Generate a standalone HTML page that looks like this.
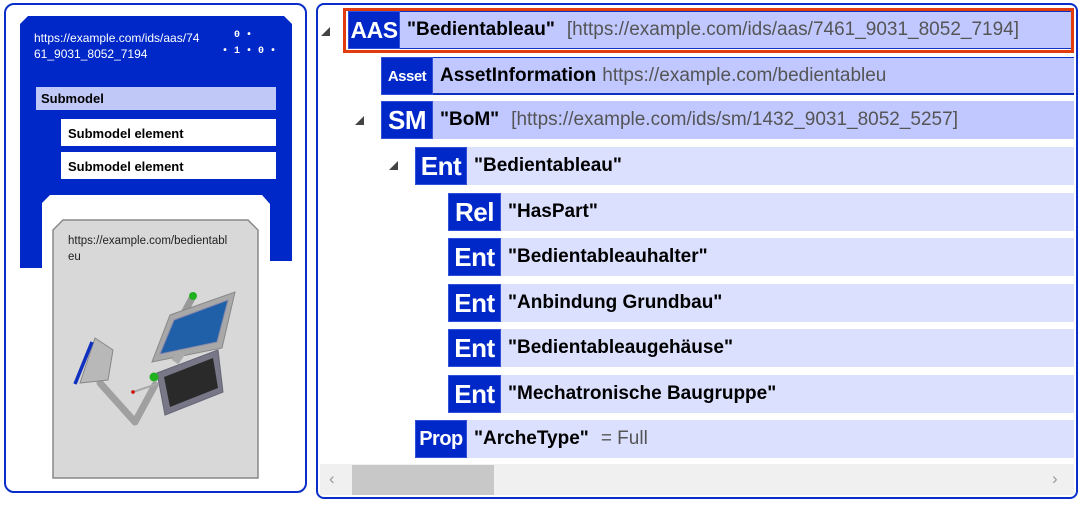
<!DOCTYPE html>
<html><head><meta charset="utf-8"><style>
*{margin:0;padding:0;box-sizing:border-box}
body{width:1082px;height:505px;background:#fff;position:relative;overflow:hidden;font-family:"Liberation Sans",sans-serif}
.a{position:absolute}
.badge{position:absolute;background:#0028c8;color:#fff;font-weight:bold;text-align:center;border:1px solid #3050d8;display:flex;align-items:center;justify-content:center;letter-spacing:-0.5px}
.row{position:absolute;font-size:19px;font-weight:bold;color:#000;display:flex;align-items:center;padding-left:7px;white-space:nowrap;overflow:hidden}
.g{color:#555;font-weight:normal;margin-left:12px}
.tri{position:absolute;width:0;height:0;border-left:9px solid transparent;border-bottom:9px solid #444}
</style></head><body>
<div class="a" style="left:4px;top:3px;width:303px;height:490px;border:2px solid #0a2fc8;border-radius:10px"></div>
<svg class="a" style="left:0;top:0" width="310" height="500">
<polygon points="28,16 284,16 292,24 292,261 270,261 270,204 262,195 50,195 42,203 42,268 20,268 20,24" fill="#0028c8"/>
<polygon points="63,220 248,220 258,230 258,478 53,478 53,230" fill="#d8d8d8" stroke="#888" stroke-width="1.5"/>
<path d="M100,383 L135,422 L155,385" stroke="#a0a0a0" stroke-width="7" fill="none" stroke-linecap="round" stroke-linejoin="round"/>
<polygon points="95,338 113,350 108,380 80,383" fill="#b8b8b8" stroke="#888"/>
<line x1="92" y1="342" x2="75" y2="384" stroke="#1030c0" stroke-width="3.5"/>
<line x1="183" y1="315" x2="192" y2="298" stroke="#999" stroke-width="7"/>
<circle cx="193" cy="296" r="4" fill="#20b020"/>
<polygon points="170,315 235,292 222,348 152,362" fill="#a8a8a8" stroke="#888"/>
<polygon points="174,320 228,300 217,342 160,354" fill="#2060a8" stroke="#88a"/>
<line x1="175" y1="362" x2="182" y2="352" stroke="#aaa" stroke-width="8"/>
<polygon points="157,373 218,350 223,392 165,415" fill="#778" stroke="#667"/>
<polygon points="164,377 213,358 218,388 170,407" fill="#2a2a2a"/>
<circle cx="154" cy="377" r="4.5" fill="#20b020"/>
<line x1="133" y1="392" x2="157" y2="384" stroke="#aaa" stroke-width="2"/>
<circle cx="133" cy="392" r="1.8" fill="#c00"/>
</svg>
<div class="a" style="left:34px;top:30px;color:#fff;font-size:12px;line-height:16px;width:180px">https://example.com/ids/aas/74<br>61_9031_8052_7194</div>
<div class="a" style="left:234px;top:30px;color:#fff;font-size:10px;font-family:'Liberation Mono',monospace;font-weight:bold">0 •</div>
<div class="a" style="left:222px;top:46px;color:#fff;font-size:10px;font-family:'Liberation Mono',monospace;font-weight:bold">• 1 • 0 •</div>
<div class="a" style="left:36px;top:87px;width:240px;height:23px;background:#c0c8f8;font-size:13px;font-weight:bold;padding:4px 5px">Submodel</div>
<div class="a" style="left:61px;top:119px;width:215px;height:27px;background:#fff;font-size:13px;font-weight:bold;padding:7px 7px">Submodel element</div>
<div class="a" style="left:61px;top:152px;width:215px;height:27px;background:#fff;font-size:13px;font-weight:bold;padding:7px 7px">Submodel element</div>
<div class="a" style="left:68px;top:233px;font-size:11.5px;line-height:16px;color:#222;width:185px">https://example.com/bedientabl<br>eu</div>

<div class="a" style="left:316px;top:3px;width:762px;height:496px;border:2px solid #0a2fc8;border-radius:8px"></div>
<div class="tri" style="left:321px;top:27px"></div>
<div class="tri" style="left:355px;top:116px"></div>
<div class="tri" style="left:389px;top:161px"></div>

<div class="a" style="left:343px;top:8px;width:731px;height:45px;border:3px solid #e03c10"></div>
<div class="row" style="left:400px;top:11px;width:671px;height:38px;background:#c0c8ff;border-top:1px solid #1030c0;border-bottom:1px solid #1030c0">"Bedientableau"<span class="g">[https://example.com/ids/aas/7461_9031_8052_7194]</span></div>
<div class="badge" style="left:348px;top:11px;width:52px;height:38px;font-size:23px">AAS</div>

<div class="row" style="left:433px;top:57px;width:641px;height:38px;background:#c0c8ff;border-top:1px solid #1030c0;border-bottom:2px solid #1030c0">AssetInformation<span class="g" style="margin-left:6px">https://example.com/bedientableu</span></div>
<div class="badge" style="left:381px;top:57px;width:52px;height:38px;font-size:15px">Asset</div>

<div class="row" style="left:433px;top:101px;width:641px;height:38px;background:#c0c8ff">"BoM"<span class="g">[https://example.com/ids/sm/1432_9031_8052_5257]</span></div>
<div class="badge" style="left:381px;top:101px;width:52px;height:38px;font-size:26px">SM</div>

<div class="row" style="left:467px;top:147px;width:607px;height:38px;background:#dce0ff">"Bedientableau"</div>
<div class="badge" style="left:415px;top:147px;width:52px;height:38px;font-size:26px">Ent</div>

<div class="row" style="left:501px;top:193px;width:573px;height:38px;background:#dce0ff">"HasPart"</div>
<div class="badge" style="left:448px;top:193px;width:53px;height:38px;font-size:26px">Rel</div>
<div class="row" style="left:501px;top:238px;width:573px;height:38px;background:#dce0ff">"Bedientableauhalter"</div>
<div class="badge" style="left:448px;top:238px;width:53px;height:38px;font-size:26px">Ent</div>
<div class="row" style="left:501px;top:284px;width:573px;height:38px;background:#dce0ff">"Anbindung Grundbau"</div>
<div class="badge" style="left:448px;top:284px;width:53px;height:38px;font-size:26px">Ent</div>
<div class="row" style="left:501px;top:329px;width:573px;height:38px;background:#dce0ff">"Bedientableaugehäuse"</div>
<div class="badge" style="left:448px;top:329px;width:53px;height:38px;font-size:26px">Ent</div>
<div class="row" style="left:501px;top:375px;width:573px;height:38px;background:#dce0ff">"Mechatronische Baugruppe"</div>
<div class="badge" style="left:448px;top:375px;width:53px;height:38px;font-size:26px">Ent</div>

<div class="row" style="left:467px;top:420px;width:607px;height:38px;background:#dce0ff">"ArcheType"<span class="g">= Full</span></div>
<div class="badge" style="left:415px;top:420px;width:52px;height:38px;font-size:20px">Prop</div>

<div class="a" style="left:320px;top:464px;width:754px;height:31px;background:#f0f0f0"></div>
<div class="a" style="left:352px;top:465px;width:142px;height:30px;background:#c8c8c8"></div>
<div class="a" style="left:329px;top:469px;color:#999;font-size:17px">‹</div>
<div class="a" style="left:1052px;top:469px;color:#999;font-size:17px">›</div>
</body></html>
